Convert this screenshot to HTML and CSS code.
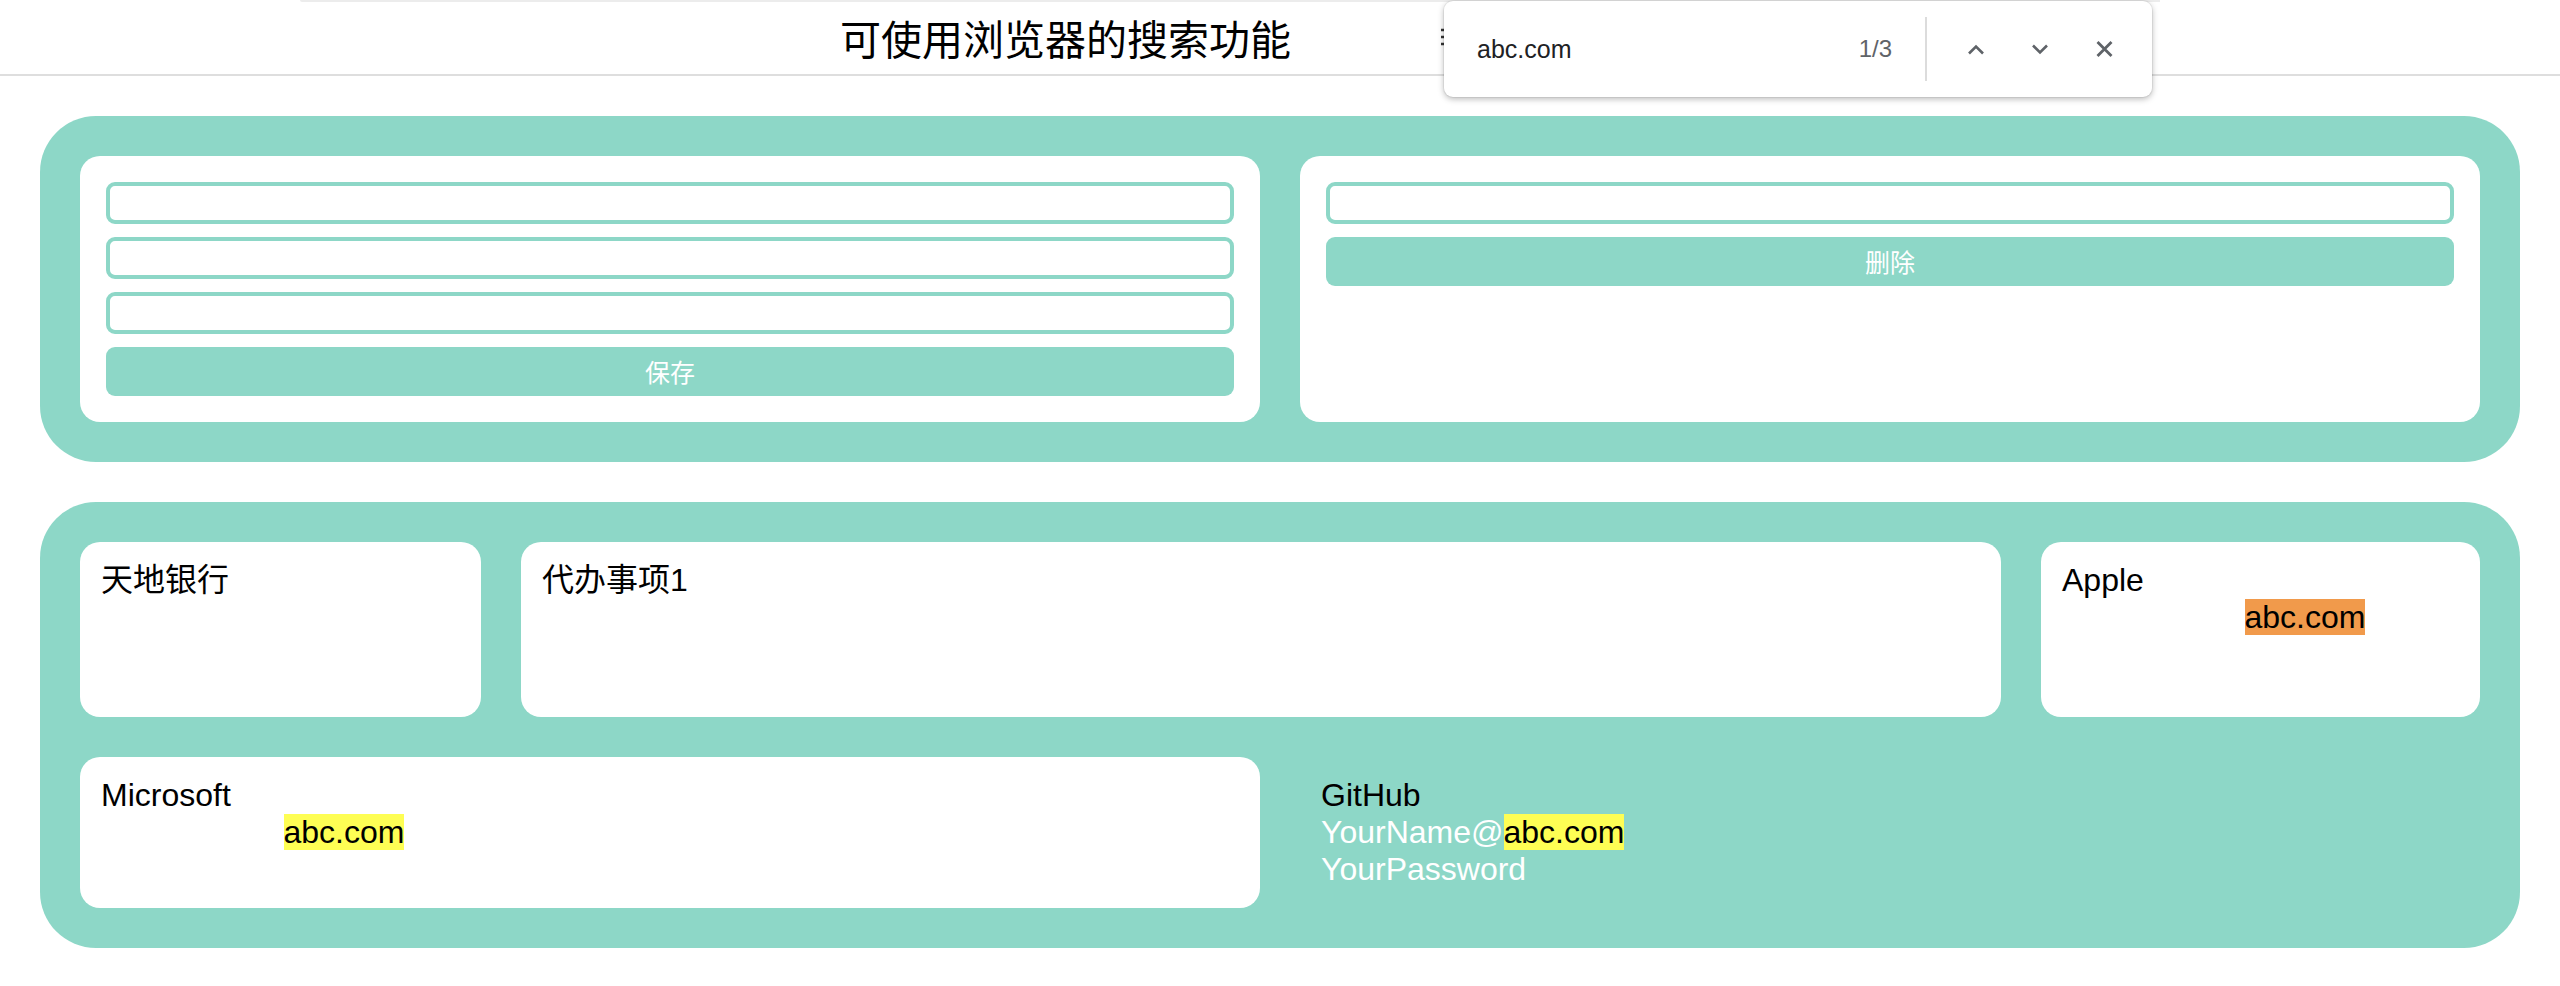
FILE: index.html
```html
<!DOCTYPE html>
<html lang="zh-CN">
<head>
<meta charset="utf-8">
<title>搜索演示</title>
<link rel="stylesheet" href="styles.css">
</head>
<body>
<div class="tabstrip"></div>
<header class="topbar">
  <h1 class="title">可使用浏览器的搜索功能</h1>
  <svg class="menu-icon" width="24" height="20" viewBox="0 0 24 20"><path d="M2 3h20M2 10h20M2 17h20" stroke="#333" stroke-width="2.5" fill="none"/></svg>
</header>

<div class="findbar">
  <span class="find-query">abc.com</span>
  <span class="find-count">1/3</span>
  <span class="find-divider"></span>
  <span class="find-btn"><svg width="18" height="11" viewBox="0 0 18 11"><path d="M2 9.5 L9 2.5 L16 9.5" stroke="#5f6368" stroke-width="2.6" fill="none"/></svg></span>
  <span class="find-btn"><svg width="18" height="11" viewBox="0 0 18 11"><path d="M2 1.5 L9 8.5 L16 1.5" stroke="#5f6368" stroke-width="2.6" fill="none"/></svg></span>
  <span class="find-btn"><svg width="17" height="16" viewBox="0 0 17 16"><path d="M1.5 1 L15.5 15 M15.5 1 L1.5 15" stroke="#5f6368" stroke-width="2.8" fill="none"/></svg></span>
</div>

<section class="panel">
  <div class="form-grid">
    <div class="form-card">
      <input class="field" type="text">
      <input class="field" type="text">
      <input class="field" type="text">
      <button class="btn">保存</button>
    </div>
    <div class="form-card">
      <input class="field" type="text">
      <button class="btn">删除</button>
    </div>
  </div>
</section>

<section class="panel">
  <div class="tiles-top">
    <div class="tile">天地银行</div>
    <div class="tile">代办事项1</div>
    <div class="tile">
      <div>Apple</div>
      <div class="line-hidden">YourName@<mark class="hit hit-active">abc.com</mark></div>
      <div class="line-hidden">YourPassword</div>
    </div>
  </div>
  <div class="tiles-bottom">
    <div class="tile">
      <div>Microsoft</div>
      <div class="line-hidden">YourName@<mark class="hit">abc.com</mark></div>
      <div class="line-hidden">YourPassword</div>
    </div>
    <div class="tile tile-plain">
      <div>GitHub</div>
      <div class="line-hidden">YourName@<mark class="hit">abc.com</mark></div>
      <div class="line-hidden">YourPassword</div>
    </div>
  </div>
</section>
</body>
</html>
```

FILE: styles.css
```css
html, body {
  margin: 0;
  background: #fff;
}
body {
  position: relative;
  font-family: "Liberation Sans", Arial, "Noto Sans CJK SC", sans-serif;
  color: #000;
}
.tabstrip {
  position: absolute;
  left: 300px;
  top: 0;
  width: 1860px;
  height: 2px;
  background: #ececec;
  border-bottom-left-radius: 6px;
}
.topbar {
  height: 74px;
  border-bottom: 2px solid #dedede;
  display: flex;
  align-items: center;
  padding-left: 840px;
}
.title {
  margin: 0;
  font: 400 41px/1 "Noto Sans CJK SC", sans-serif;
  color: #000;
}
.menu-icon {
  margin-left: 148px;
}

.findbar {
  position: absolute;
  left: 1444px;
  top: 1px;
  width: 708px;
  height: 96px;
  box-sizing: border-box;
  background: #fff;
  border-radius: 9px;
  box-shadow: 0 2px 6px rgba(0, 0, 0, 0.28), 0 0 0 1px rgba(0, 0, 0, 0.05);
  display: flex;
  align-items: center;
  padding: 0 28px 0 33px;
}
.find-query {
  flex: 1;
  font-size: 25px;
  color: #202124;
}
.find-count {
  font-size: 24px;
  color: #5f6368;
}
.find-divider {
  width: 2px;
  height: 64px;
  background: #dcdcdc;
  margin: 0 29px 0 33px;
}
.find-btn {
  width: 40px;
  height: 40px;
  display: flex;
  align-items: center;
  justify-content: center;
}
.find-btn + .find-btn {
  margin-left: 24px;
}

.panel {
  margin: 40px;
  padding: 40px;
  background: #8dd7c7;
  border-radius: 56px;
}
.form-grid {
  display: grid;
  grid-template-columns: 1fr 1fr;
  gap: 40px;
}
.form-card {
  background: #fff;
  border-radius: 20px;
  padding: 26px;
  display: flex;
  flex-direction: column;
  gap: 13px;
}
.field {
  display: block;
  width: 100%;
  height: 42px;
  box-sizing: border-box;
  border: 4px solid #8dd7c7;
  border-radius: 9px;
  background: #fff;
  outline: none;
  margin: 0;
}
.btn {
  display: block;
  width: 100%;
  height: 49px;
  border: 0;
  border-radius: 9px;
  background: #8dd7c7;
  color: #fff;
  font: 400 25px/1 "Noto Sans CJK SC", sans-serif;
  margin: 0;
  padding: 0;
}

.tiles-top {
  display: grid;
  grid-template-columns: 401px 1fr 439px;
  gap: 40px;
}
.tiles-bottom {
  display: grid;
  grid-template-columns: 1fr 1fr;
  gap: 40px;
  margin-top: 40px;
}
.tile {
  background: #fff;
  border-radius: 20px;
  padding: 20px 21px;
  font-size: 32px;
  line-height: 37px;
  color: #000;
}
.tiles-top .tile {
  min-height: 175px;
  box-sizing: border-box;
}
.tile-plain {
  background: transparent;
}
.line-hidden {
  color: #fff;
}
.hit {
  background: #fefe54;
  color: #000;
}
.hit-active {
  background: #f19a4b;
}
```
